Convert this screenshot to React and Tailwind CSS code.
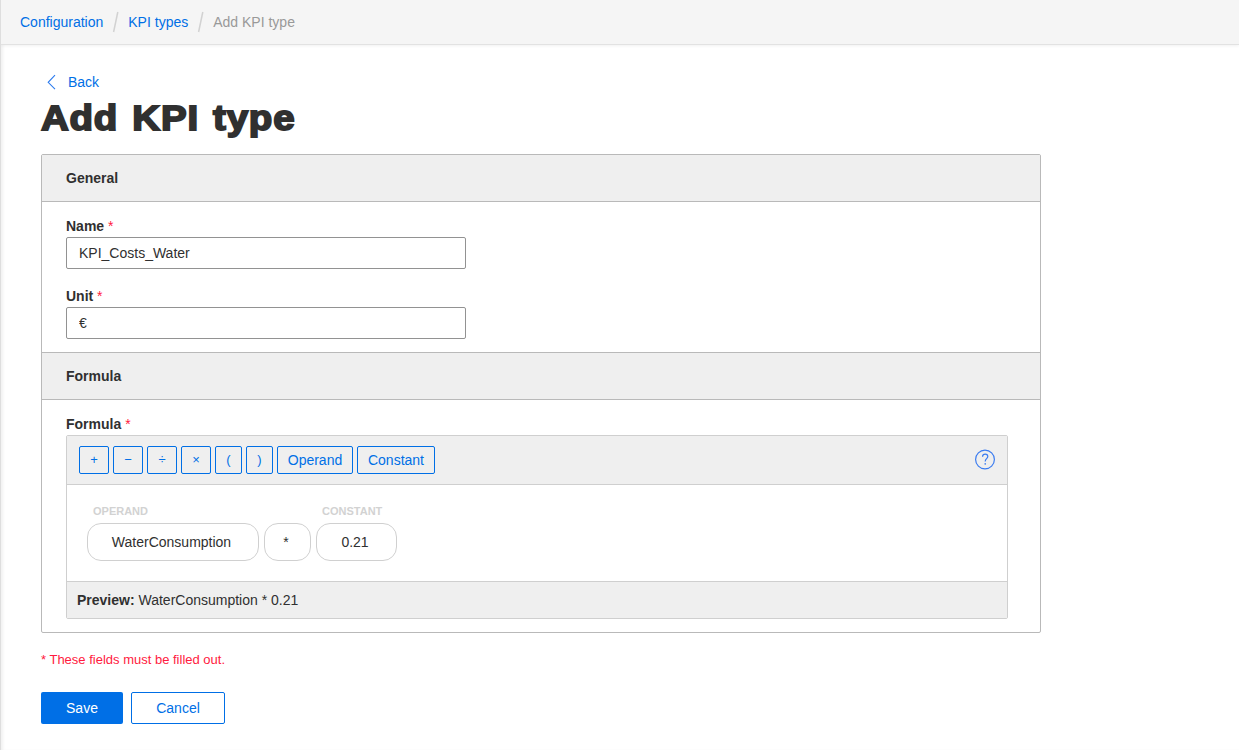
const OPERATORS = [
  { label: "+", width: "w-[30px] text-[13px]" },
  { label: "−", width: "w-[30px] text-[13px]" },
  { label: "÷", width: "w-[30px] text-[13px]" },
  { label: "×", width: "w-[30px] text-[13px]" },
  { label: "(", width: "w-[27px] text-[13px]" },
  { label: ")", width: "w-[27px] text-[13px]" },
  { label: "Operand", width: "w-[76px] text-sm" },
  { label: "Constant", width: "w-[78px] text-sm" },
];

const TOKENS = [
  { kind: "OPERAND", value: "WaterConsumption", width: "w-[172px]" },
  { kind: "", value: "*", width: "w-[47px]" },
  { kind: "CONSTANT", value: "0.21", width: "w-[81px]" },
];

function Slash() {
  return (
    <svg className="mx-[9px] h-[22px] w-[7px]" viewBox="0 0 7 22" fill="none" stroke="#d2d2d2" strokeWidth="1.5">
      <path d="M5.8 1 1.6 21" />
    </svg>
  );
}

function Breadcrumbs() {
  return (
    <nav className="flex h-[45px] items-center border-b border-[#e2e2e2] bg-[#f5f5f5] pl-[19px] shadow-[0_1px_3px_rgba(0,0,0,0.06)]">
      <a className="text-[#006fe6]">Configuration</a>
      <Slash />
      <a className="text-[#006fe6]">KPI types</a>
      <Slash />
      <span className="text-[#999]">Add KPI type</span>
    </nav>
  );
}

function SectionHeader({ children, className = "" }) {
  return (
    <h2 className={`flex items-center border-b border-[#b9b9b9] bg-[#efefef] pl-6 font-bold ${className}`}>
      {children}
    </h2>
  );
}

function Label({ children }) {
  return (
    <label className="block h-5 leading-5 font-bold">
      {children} <span className="font-normal text-[#ff1a40]">*</span>
    </label>
  );
}

function Field({ label, value }) {
  return (
    <div>
      <Label>{label}</Label>
      <input
        defaultValue={value}
        className="mt-px block h-8 w-[400px] rounded-[2px] border border-[#929292] bg-white px-3 outline-none"
      />
    </div>
  );
}

function FormulaEditor() {
  return (
    <div className="mt-px w-[942px] overflow-hidden rounded-[2px] border border-[#cfcfcf]">
      <div className="flex h-[49px] items-center gap-1 border-b border-[#cfcfcf] bg-[#efefef] pr-[11px] pl-3">
        {OPERATORS.map((op) => (
          <button
            key={op.label}
            className={`flex h-7 items-center justify-center rounded-[2px] border border-[#006fe6] text-[#006fe6] ${op.width}`}
          >
            {op.label}
          </button>
        ))}
        <svg className="mb-px ml-auto size-[22px]" viewBox="0 0 22 22" fill="none" stroke="#3b7cf0" strokeWidth="1.2">
          <circle cx="11" cy="10.5" r="9.4" />
          <path d="M8.5 7.7C8.6 6 9.6 5.2 11.2 5.2c1.6 0 2.6.9 2.6 2.3 0 2.1-2.6 2.3-2.6 4.9M11.2 14.1v1.7" />
        </svg>
      </div>
      <div className="flex h-24 items-start gap-[5px] pt-[18px] pl-5">
        {TOKENS.map((token) => (
          <div key={token.value}>
            <div className="h-5 pl-1.5 text-[11px] leading-[17px] font-bold text-[#d2d2d2]">{token.kind}</div>
            <div className={`flex h-[38px] items-center justify-center rounded-[14px] border border-[#d0d0d0] pr-[3px] ${token.width}`}>
              {token.value}
            </div>
          </div>
        ))}
      </div>
      <div className="flex h-[37px] items-center border-t border-[#cfcfcf] bg-[#efefef] pl-2.5">
        <p>
          <strong>Preview:</strong> WaterConsumption * 0.21
        </p>
      </div>
    </div>
  );
}

export default function App() {
  return (
    <div className="h-[750px] w-[1239px] overflow-hidden border-l border-[#dedede] bg-white font-['Liberation_Sans',Arial,sans-serif] text-sm text-[#303030] shadow-[inset_3px_0_3px_-1px_rgba(0,0,0,0.06)]">
      <Breadcrumbs />
      <main className="pl-10">
        <a className="mt-[27px] flex h-5 items-center text-[#006fe6]">
          <svg className="mr-[11px] ml-[5px] h-4 w-[11px]" viewBox="0 0 11 16" fill="none" stroke="#2c7bee" strokeWidth="1.1">
            <path d="M9 1.2 2.2 8.3 9 15.2" />
          </svg>
          Back
        </a>
        <h1 className="h-[54px] origin-left scale-x-[1.1] text-[35px] leading-[52px] font-bold tracking-[0.7px] [word-spacing:2.5px] whitespace-nowrap [-webkit-text-stroke:1.8px_#303030]">
          Add KPI type
        </h1>
        <section className="mt-2 h-[479px] w-[1000px] overflow-hidden rounded-[2px] border border-[#b9b9b9]">
          <SectionHeader className="h-[47px]">General</SectionHeader>
          <div className="flex h-[150px] flex-col gap-[17px] pt-3.5 pl-6">
            <Field label="Name" value="KPI_Costs_Water" />
            <Field label="Unit" value="€" />
          </div>
          <SectionHeader className="h-12 border-t">Formula</SectionHeader>
          <div className="pt-3.5 pl-6">
            <Label>Formula</Label>
            <FormulaEditor />
          </div>
        </section>
        <p className="mt-4 h-5 text-[13px] leading-[22px] text-[#ff1a40]">* These fields must be filled out.</p>
        <div className="mt-[23px] flex gap-2">
          <button className="h-8 w-[82px] rounded-[2px] bg-[#006fe6] text-white">Save</button>
          <button className="h-8 w-[94px] rounded-[2px] border border-[#006fe6] bg-white text-[#006fe6]">Cancel</button>
        </div>
      </main>
    </div>
  );
}
